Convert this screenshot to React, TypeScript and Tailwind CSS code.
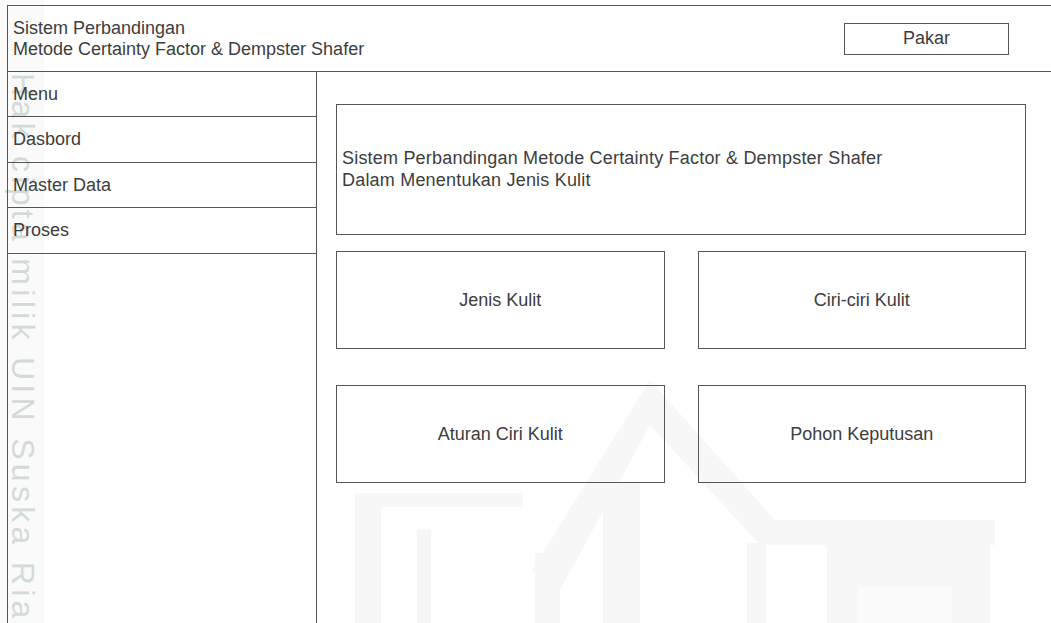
import React from "react";

const menuRows = [
  { label: "Menu", h: "h-[45px]" },
  { label: "Dasbord", h: "h-[46px]" },
  { label: "Master Data", h: "h-[45px]" },
  { label: "Proses", h: "h-[46px]" },
];

function Tile({ label }: { label: string }) {
  return (
    <div className="h-[98px] border border-[#555] flex items-center justify-center">
      <span>{label}</span>
    </div>
  );
}

// Faint campus emblem printed behind the page content
function Emblem() {
  return (
    <svg
      className="absolute inset-0 pointer-events-none"
      width={1051}
      height={623}
      viewBox="0 0 1051 623"
    >
      <g fill="#f7f7f7">
        {/* roof */}
        <polygon points="532,570 650,380 775,520 995,520 995,545 760,545 650,425 560,590" />
        {/* left frame */}
        <rect x={355} y={493} width={26} height={130} />
        <rect x={355} y={493} width={168} height={14} />
        <rect x={417} y={530} width={14} height={93} />
        <rect x={535} y={553} width={25} height={70} />
        <rect x={603} y={483} width={37} height={140} />
        {/* right frame */}
        <rect x={747} y={543} width={19} height={80} />
        <rect x={827} y={543} width={163} height={80} />
      </g>
      <rect x={858} y={587} width={94} height={36} fill="#fbfbfb" />
    </svg>
  );
}

export default function App() {
  return (
    <div className="relative w-[1051px] h-[623px] overflow-hidden bg-white font-['Liberation_Sans',Arial,sans-serif] text-[18px] leading-[21px] text-[#3d3d3d]">
      <Emblem />
      {/* vertical copyright line along the left edge */}
      <div className="absolute left-0 top-0 w-[44px] h-full bg-[#f8f8f8] opacity-70 pointer-events-none" />
      <div className="absolute left-[7px] top-[73px] [writing-mode:vertical-rl] text-[32px] leading-[32px] tracking-[4.3px] text-[#d3dbd7] whitespace-nowrap pointer-events-none">
        Hak cipta milik UIN Suska Riau
      </div>

      <div className="relative h-full pl-[7px] pt-[5px]">
        <div className="h-full flex flex-col border-l border-t border-[#555]">
          <header className="h-[66px] shrink-0 border-b border-[#555] flex items-center justify-between pl-[5px] pr-[42px]">
            <div>
              <div>Sistem Perbandingan</div>
              <div>Metode Certainty Factor &amp; Dempster Shafer</div>
            </div>
            <div className="w-[165px] h-[32px] border border-[#555] flex items-center justify-center">
              Pakar
            </div>
          </header>

          <div className="flex flex-1 min-h-0">
            <aside className="w-[309px] shrink-0 border-r border-[#555]">
              {menuRows.map((r) => (
                <div
                  key={r.label}
                  className={`${r.h} border-b border-[#555] flex items-center pl-[5px]`}
                >
                  {r.label}
                </div>
              ))}
            </aside>

            <main className="flex-1 pl-[19px] pr-[25px] pt-[32px]">
              <div className="h-[131px] border border-[#555] flex flex-col justify-center pl-[5px] leading-[21.5px] tracking-[0.2px]">
                <div>Sistem Perbandingan Metode Certainty Factor &amp; Dempster Shafer</div>
                <div>Dalam Menentukan Jenis Kulit</div>
              </div>
              <div className="mt-[16px] grid grid-cols-2 gap-x-[33px] gap-y-[36px]">
                <Tile label="Jenis Kulit" />
                <Tile label="Ciri-ciri Kulit" />
                <Tile label="Aturan Ciri Kulit" />
                <Tile label="Pohon Keputusan" />
              </div>
            </main>
          </div>
        </div>
      </div>
    </div>
  );
}
